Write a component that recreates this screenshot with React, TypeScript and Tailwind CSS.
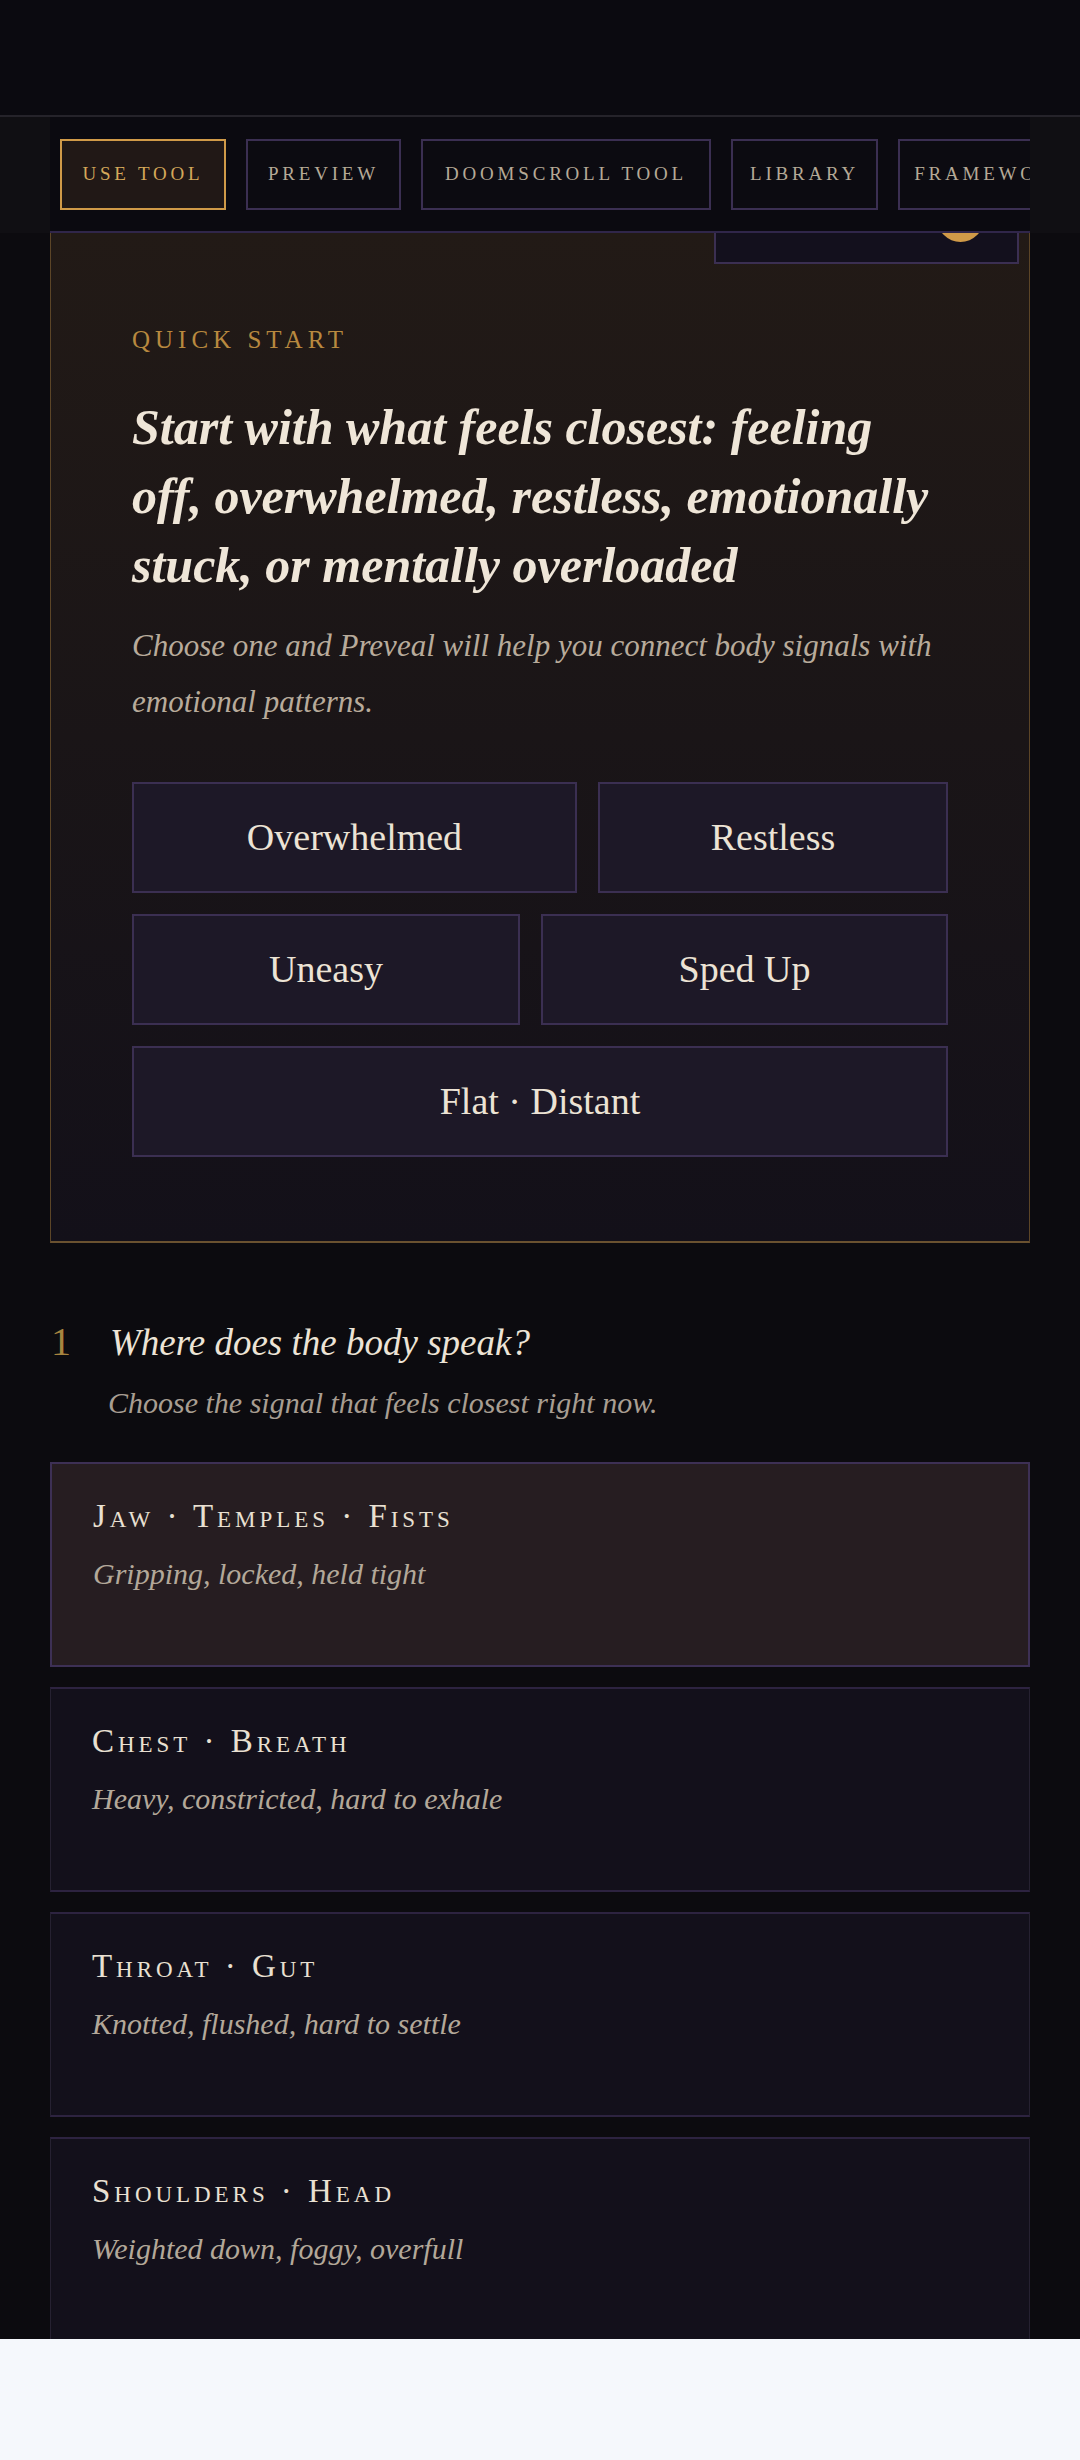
import React from 'react';

const tabs = [
  { label: 'Use Tool', width: 'w-[166px]', active: true },
  { label: 'Preview', width: 'w-[155px]', active: false },
  { label: 'Doomscroll Tool', width: 'w-[290px]', active: false },
  { label: 'Library', width: 'w-[147px]', active: false },
  { label: 'Framework', width: 'w-[190px]', active: false },
];

const signals = [
  { title: 'Jaw · Temples · Fists', desc: 'Gripping, locked, held tight', selected: true },
  { title: 'Chest · Breath', desc: 'Heavy, constricted, hard to exhale', selected: false },
  { title: 'Throat · Gut', desc: 'Knotted, flushed, hard to settle', selected: false },
  { title: 'Shoulders · Head', desc: 'Weighted down, foggy, overfull', selected: false },
];

function FeelingButton({ label, className }: { label: string; className: string }) {
  return (
    <button
      className={`h-[111px] border-2 border-[#3b2f52] bg-[#1d1827] text-[38px] text-[#ece3d5] flex items-center justify-center ${className}`}
    >
      {label}
    </button>
  );
}

function SignalCard({ title, desc, selected }: { title: string; desc: string; selected: boolean }) {
  return (
    <button
      className={`h-[205px] w-full text-left pl-[41px] pt-[32px] flex flex-col ${
        selected
          ? 'bg-[#261d21] border-2 border-[#3d3055]'
          : 'bg-[#13101b] border-x border-y-2 border-x-[#262131] border-y-[#2d2340]'
      }`}
    >
      <span className="text-[33px] leading-[40px] tracking-[0.12em] [font-variant-caps:small-caps] text-[#e9e0d2]">
        {title}
      </span>
      <span className="mt-[18px] text-[30px] leading-[40px] italic text-[#b3a899]">{desc}</span>
    </button>
  );
}

export default function App() {
  return (
    <div className="min-h-screen bg-[#f5f8fc] font-['Liberation_Serif',serif]">
      <div className="h-[2339px] overflow-hidden bg-[#0c0b0f]">
        <div className="h-[115px] bg-[#0b0a10]" />
        <div className="h-[2px] bg-[#25232a]" />

        {/* tab bar */}
        <div className="flex justify-center bg-[#100f13]">
          <nav className="w-[980px] h-[116px] border-b-2 border-[#30264a] bg-[#0b0a10] overflow-hidden flex items-center gap-[20px] pl-[10px]">
            {tabs.map((t) => (
              <div
                key={t.label}
                className={`${t.width} h-[71px] shrink-0 border-2 flex items-center justify-center uppercase text-[19px] tracking-[0.2em] whitespace-nowrap ${
                  t.active
                    ? 'border-[#d09a48] bg-[#211816] text-[#d4a85a]'
                    : 'border-[#3b2f52] bg-[#0c0b11] text-[#b5a996]'
                }`}
              >
                {t.label}
              </div>
            ))}
          </nav>
        </div>

        {/* quick start card */}
        <section className="mx-[50px] border-x border-x-[#5c4527] border-b-2 border-b-[#6b5230] bg-gradient-to-b from-[#221a16] via-[#1a1517] to-[#131019] px-[81px] pb-[84px]">
          <div className="flex justify-end -mr-[71px]">
            <div className="w-[305px] h-[31px] border-2 border-t-0 border-[#3b2f52] bg-[#13101d] pl-[226px]">
              <svg width="37" height="9" viewBox="0 0 37 9" className="block">
                <circle cx="18.5" cy="-14.5" r="23.5" fill="#d09a48" />
              </svg>
            </div>
          </div>

          <p className="mt-[61px] text-[25px] leading-[30px] tracking-[0.2em] uppercase text-[#b8893f]">
            Quick Start
          </p>
          <h1 className="mt-[38px] text-[50px] leading-[69px] font-bold italic text-[#efe6d8]">
            Start with what feels closest: feeling off, overwhelmed, restless, emotionally stuck, or mentally overloaded
          </h1>
          <p className="mt-[18px] text-[31px] leading-[56px] italic text-[#b8ab9b]">
            Choose one and Preveal will help you connect body signals with emotional patterns.
          </p>

          <div className="mt-[52px] flex flex-col gap-[21px]">
            <div className="flex gap-[21px]">
              <FeelingButton label="Overwhelmed" className="w-[445px]" />
              <FeelingButton label="Restless" className="flex-1" />
            </div>
            <div className="flex gap-[21px]">
              <FeelingButton label="Uneasy" className="w-[388px]" />
              <FeelingButton label="Sped Up" className="flex-1" />
            </div>
            <FeelingButton label="Flat · Distant" className="w-full" />
          </div>
        </section>

        {/* step 1 */}
        <section className="mx-[50px] mt-[77px]">
          <div className="flex items-baseline">
            <span className="w-[60px] pl-[1px] text-[40px] leading-[44px] text-[#a7843f]">1</span>
            <h2 className="text-[37px] leading-[44px] italic text-[#ede4d6]">Where does the body speak?</h2>
          </div>
          <p className="mt-[18px] pl-[58px] text-[30px] leading-[40px] italic text-[#a89e92]">
            Choose the signal that feels closest right now.
          </p>

          <div className="mt-[39px] flex flex-col gap-[20px]">
            {signals.map((s) => (
              <SignalCard key={s.title} {...s} />
            ))}
          </div>
        </section>
      </div>
    </div>
  );
}
